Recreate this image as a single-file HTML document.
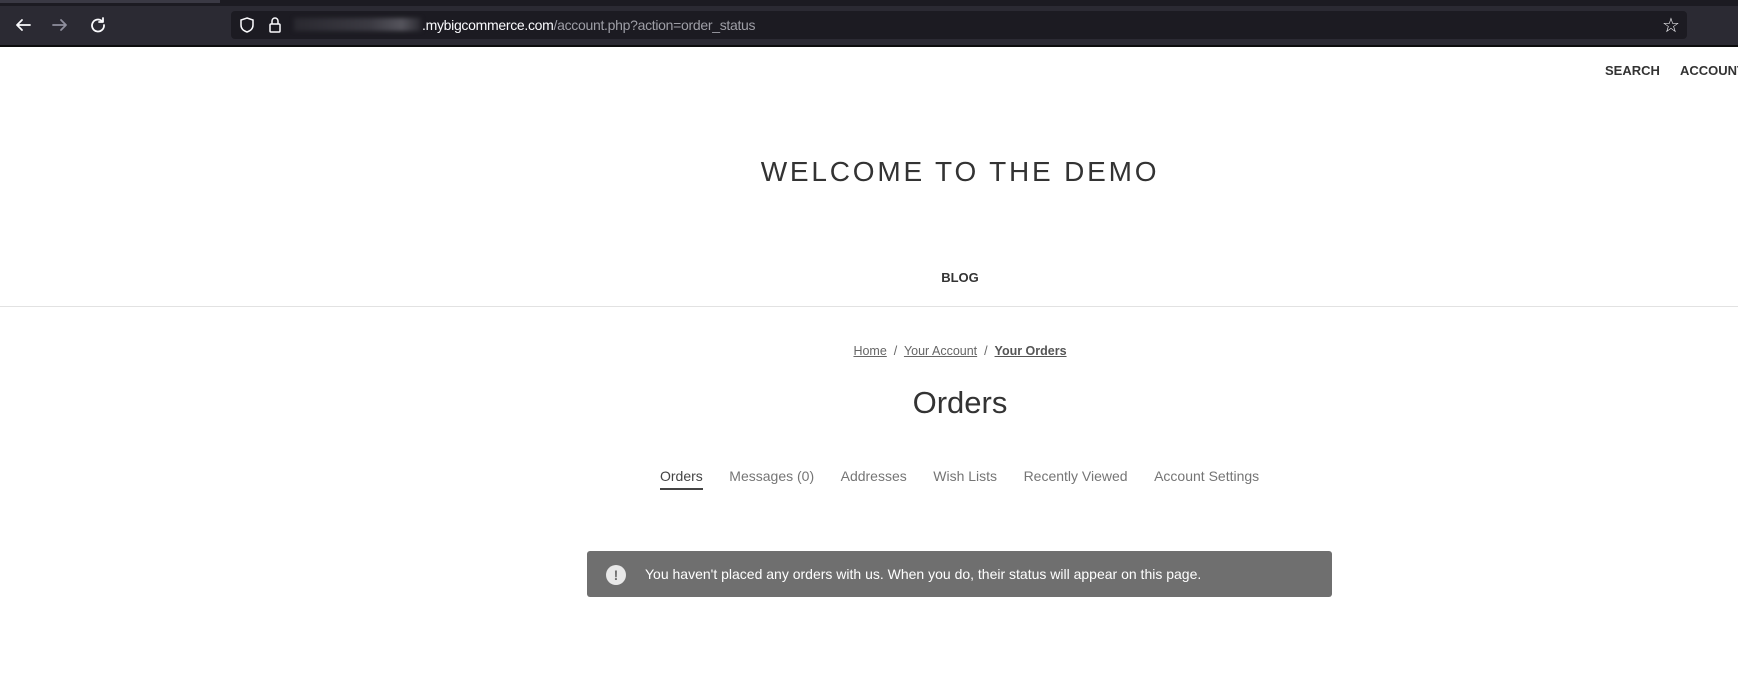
<!DOCTYPE html>
<html><head><style>
*{margin:0;padding:0;box-sizing:border-box}
body{width:1738px;height:686px;background:#fff;font-family:"Liberation Sans",sans-serif;position:relative;overflow:hidden}
.a{position:absolute;white-space:nowrap}
.c{position:absolute;left:0;width:1920px;text-align:center;white-space:nowrap}
</style></head><body>
<div class="a" style="left:0;top:0;width:1738px;height:46px;background:#2b2a33"></div>
<div class="a" style="left:0;top:0;width:1738px;height:6px;background:#1c1b22"></div>
<div class="a" style="left:0;top:0;width:220px;height:3px;background:#3a3944"></div>
<div class="a" style="left:0;top:45px;width:1738px;height:2px;background:#0c0c0d"></div>
<svg class="a" style="left:15px;top:16px" width="110" height="18" viewBox="0 0 110 18" fill="none" stroke-width="1.8" stroke-linecap="round" stroke-linejoin="round">
<path d="M2 9h13M2 9l5-5M2 9l5 5" stroke="#fbfbfe"/>
<path d="M38 9h13M51 9l-5-5M51 9l-5 5" stroke="#8f8f9d"/>
<path d="M87 5a6 6 0 1 0 2 4" stroke="#fbfbfe"/><path d="M88 2v4h-4" stroke="#fbfbfe"/>
</svg>
<div class="a" style="left:231px;top:11px;width:1456px;height:28px;background:#1c1b22;border-radius:4px"></div>
<svg class="a" style="left:239px;top:16px" width="50" height="18" viewBox="0 0 50 18" fill="none" stroke="#fbfbfe" stroke-width="1.5">
<path d="M8 2l6 2v5c0 4-3 6-6 7-3-1-6-3-6-7V4z"/>
<rect x="31" y="8" width="10" height="8" rx="1"/><path d="M33 8V5a3 3 0 0 1 6 0v3"/>
</svg>
<div class="a" style="left:294px;top:18px;width:127px;height:13px;background:linear-gradient(90deg,#2a2930,#3b3a42 60%,#55545c 85%,#2a2930);filter:blur(2px)"></div>
<div class="a" style="left:422px;top:17px;font-size:14px;color:#fbfbfe;letter-spacing:-0.3px">.mybigcommerce.com<span style="color:#9e9ea6">/account.php?action=order_status</span></div>
<div class="a" style="left:1662px;top:13px;font-size:20px;color:#fbfbfe">☆</div>

<div class="a" style="left:1605px;top:63px;font-size:13px;font-weight:bold;color:#333">SEARCH</div>
<div class="a" style="left:1680px;top:63px;font-size:13px;font-weight:bold;color:#333">ACCOUNT</div>

<div class="c" style="top:156px;font-size:28px;letter-spacing:2.8px;color:#333">WELCOME TO THE DEMO</div>
<div class="c" style="top:270px;font-size:13px;font-weight:bold;color:#333">BLOG</div>
<div class="a" style="left:0;top:306px;width:1738px;height:1px;background:#e2e2e2"></div>

<div class="c" style="top:344px;font-size:12.5px;color:#666"><span style="text-decoration:underline">Home</span> &nbsp;/&nbsp; <span style="text-decoration:underline">Your Account</span> &nbsp;/&nbsp; <b style="text-decoration:underline;color:#555">Your Orders</b></div>
<div class="c" style="top:385px;font-size:31px;color:#333">Orders</div>

<div class="a" style="left:660px;top:468px;font-size:14px;color:#757575">
<span style="color:#444;position:relative">Orders<span style="position:absolute;left:0;right:0;top:20px;height:2px;background:#444"></span></span><span style="margin-left:26.5px">Messages (0)</span><span style="margin-left:26.5px">Addresses</span><span style="margin-left:26.5px">Wish Lists</span><span style="margin-left:26.5px">Recently Viewed</span><span style="margin-left:26.5px">Account Settings</span>
</div>

<div class="a" style="left:587px;top:551px;width:745px;height:46px;background:#6f6f6f;border-radius:3px"></div>
<div class="a" style="left:606px;top:565px;width:20px;height:20px;border-radius:50%;background:#e8e8e8;color:#6f6f6f;font-size:14px;font-weight:bold;text-align:center;line-height:20px">!</div>
<div class="a" style="left:645px;top:566px;font-size:14px;color:#fff">You haven't placed any orders with us. When you do, their status will appear on this page.</div>
</body></html>
